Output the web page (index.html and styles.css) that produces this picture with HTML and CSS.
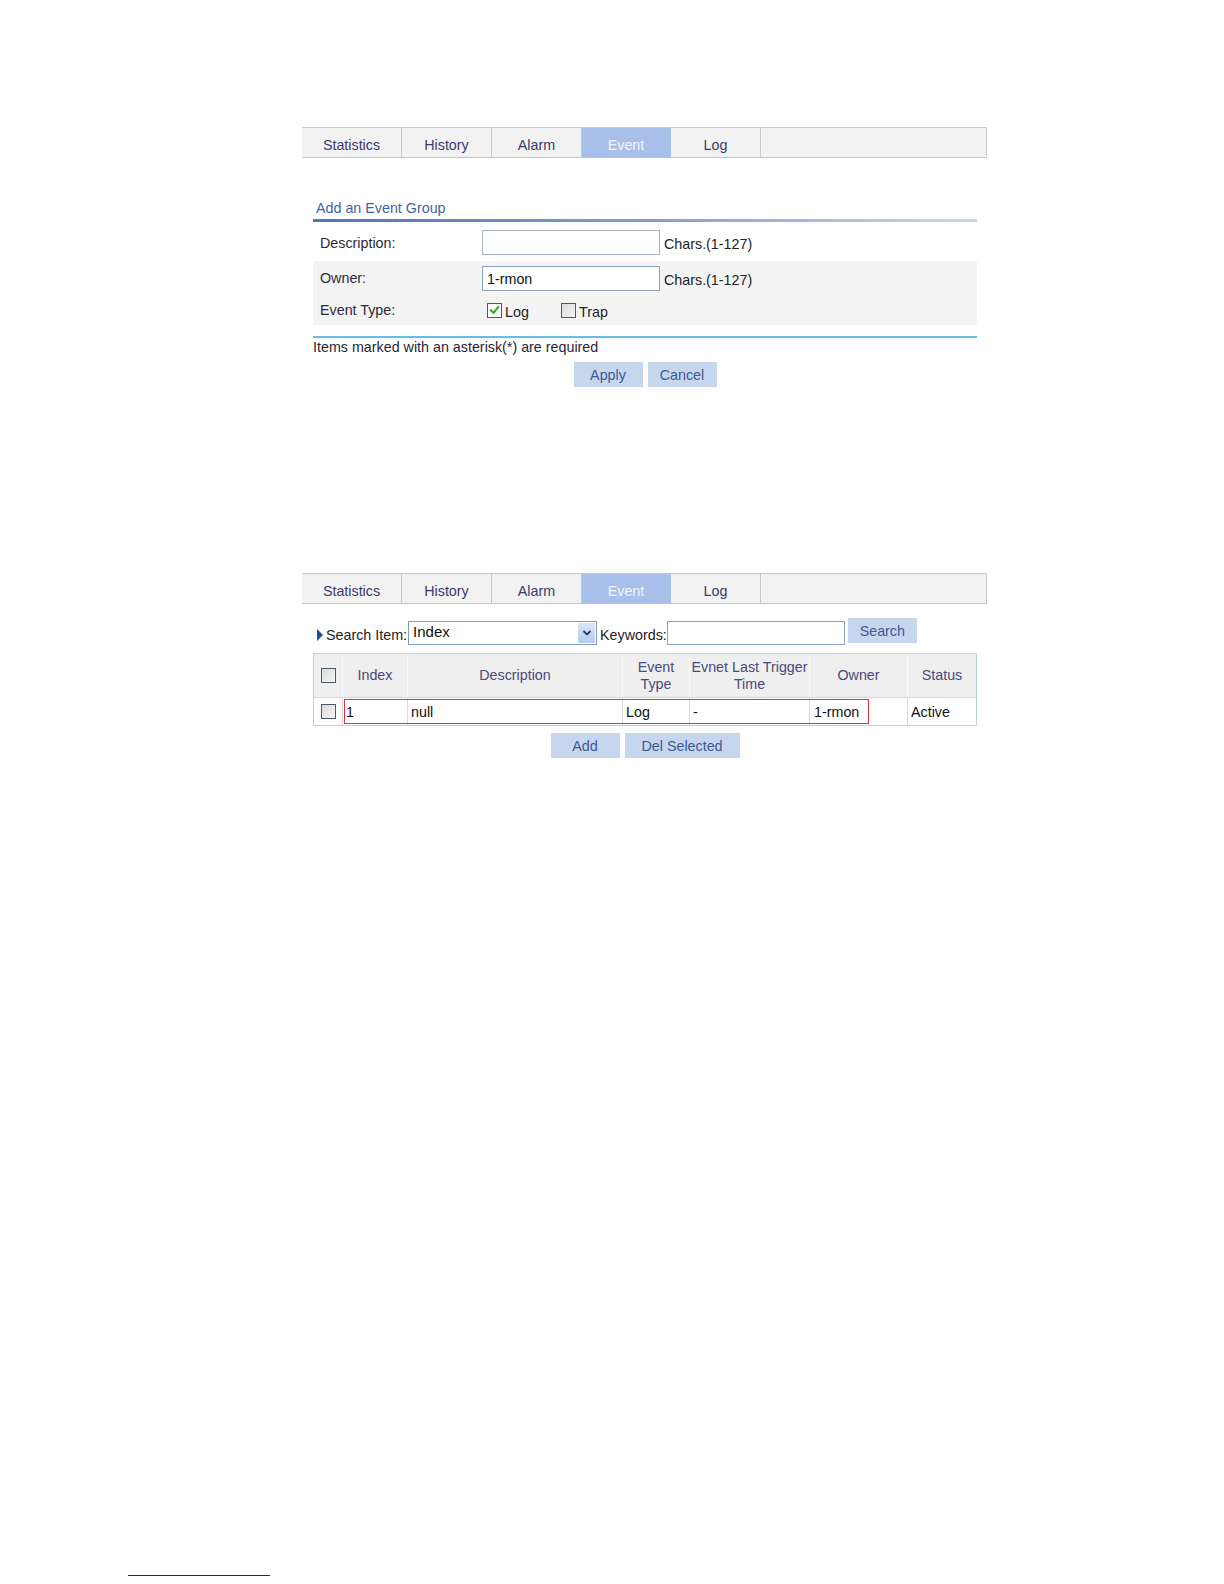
FILE: index.html
```html
<!DOCTYPE html>
<html lang="en">
<head>
<meta charset="utf-8">
<title>RMON Event</title>
<link rel="stylesheet" href="styles.css">
</head>
<body>
<div class="page">
  <section class="screen screen-add">
    <nav class="tabs">
      <div class="tab tab-stats">Statistics</div>
      <div class="tab tab-history">History</div>
      <div class="tab tab-alarm">Alarm</div>
      <div class="tab tab-event active">Event</div>
      <div class="tab tab-log">Log</div>
    </nav>
    <div class="panel">
      <div class="group-title">Add an Event Group</div>
      <div class="group-rule"></div>
      <div class="form">
        <div class="row row-white">
          <div class="label">Description:</div>
          <div class="field"><div class="text-input"></div><span class="hint">Chars.(1-127)</span></div>
        </div>
        <div class="row row-gray row-owner">
          <div class="label">Owner:</div>
          <div class="field"><div class="text-input blue">1-rmon</div><span class="hint">Chars.(1-127)</span></div>
        </div>
        <div class="row row-gray row-type">
          <div class="label">Event Type:</div>
          <div class="field">
            <span class="option option-log"><span class="check checked"><svg viewBox="0 0 14 14" width="14" height="14"><path d="M3 7.2 L6 10.2 L11.2 3.6" fill="none" stroke="#2ea82e" stroke-width="2.2" stroke-linecap="round" stroke-linejoin="round"/></svg></span><span class="check-label">Log</span></span>
            <span class="option"><span class="check"></span><span class="check-label">Trap</span></span>
          </div>
        </div>
      </div>
      <div class="blue-rule"></div>
      <div class="required">Items marked with an asterisk(*) are required</div>
      <div class="actions">
        <div class="btn btn-apply">Apply</div>
        <div class="btn btn-cancel">Cancel</div>
      </div>
    </div>
  </section>

  <section class="screen screen-list">
    <nav class="tabs">
      <div class="tab tab-stats">Statistics</div>
      <div class="tab tab-history">History</div>
      <div class="tab tab-alarm">Alarm</div>
      <div class="tab tab-event active">Event</div>
      <div class="tab tab-log">Log</div>
    </nav>
    <div class="panel">
      <div class="search-row">
        <span class="marker"></span>
        <span class="search-label">Search Item:</span>
        <div class="select"><span class="select-value">Index</span><span class="select-arrow"><svg viewBox="0 0 10 8" width="10" height="8"><path d="M1.5 2 L5 5.5 L8.5 2" fill="none" stroke="#2c3e6a" stroke-width="1.8"/></svg></span></div>
        <span class="kw-label">Keywords:</span>
        <div class="text-input kw-input"></div>
        <div class="btn btn-search">Search</div>
      </div>
      <div class="grid">
        <div class="grid-head">
          <div class="cell c-cb"><span class="check"></span></div>
          <div class="cell c-index">Index</div>
          <div class="cell c-desc">Description</div>
          <div class="cell c-type">Event<br>Type</div>
          <div class="cell c-time">Evnet Last Trigger<br>Time</div>
          <div class="cell c-owner">Owner</div>
          <div class="cell c-status">Status</div>
        </div>
        <div class="grid-row">
          <div class="cell c-cb"><span class="check"></span></div>
          <div class="cell c-index">1</div>
          <div class="cell c-desc">null</div>
          <div class="cell c-type">Log</div>
          <div class="cell c-time">-</div>
          <div class="cell c-owner">1-rmon</div>
          <div class="cell c-status">Active</div>
          <div class="highlight"></div>
        </div>
      </div>
      <div class="actions actions-list">
        <div class="btn btn-add">Add</div>
        <div class="btn btn-del">Del Selected</div>
      </div>
    </div>
  </section>

  <div class="footnote-rule"></div>
</div>
</body>
</html>
```

FILE: styles.css
```css
html, body {
  margin: 0;
  padding: 0;
  background: #ffffff;
}

body {
  font-family: "Liberation Sans", Arial, sans-serif;
  font-size: 14.3px;
  color: #222222;
  width: 1224px;
  height: 1584px;
  overflow: hidden;
}

.page {
  padding-top: 127px;
  padding-left: 302px;
  width: 686px;
}

.screen-list {
  margin-top: 186px;
}

/* Tabs */
.tabs {
  display: flex;
  height: 29px;
  background: #f2f2f2;
  border-top: 1px solid #c9c9c9;
  border-bottom: 1px solid #c4c4c4;
  border-right: 1px solid #c9c9c9;
  width: 684px;
}

.tab {
  display: flex;
  align-items: center;
  justify-content: center;
  color: #3a3a6e;
  border-right: 1px solid #c9c9c9;
  padding-top: 4px;
  box-sizing: border-box;
}

.tab-stats { width: 100px; }
.tab-history { width: 90px; }
.tab-alarm { width: 90px; }
.tab-event { width: 89px; }
.tab-log { width: 90px; }

.tab.active {
  background: #a8c0e9;
  color: #f2f6ff;
  border-right-color: #a8c0e9;
}

/* Panel */
.panel {
  margin-left: 11px;
  width: 664px;
}

.group-title {
  margin-top: 41px;
  padding-left: 3px;
  line-height: 18px;
  color: #3d64a4;
}

.group-rule {
  margin-top: 2px;
  height: 3px;
  background: linear-gradient(to right, #4f78b2 0%, #7f9fc8 50%, #c9d9ec 100%);
}

.form {
  display: flex;
  flex-direction: column;
}

.row {
  display: flex;
  align-items: center;
}

.row-white {
  height: 39px;
  background: #ffffff;
  padding-top: 2px;
  box-sizing: border-box;
}

.row-gray {
  background: #f4f4f4;
}

.row-owner {
  height: 34px;
}

.row-type {
  height: 30px;
}

.label {
  width: 162px;
  padding-left: 7px;
  color: #2e2a3c;
}

.field {
  display: flex;
  align-items: center;
}

.text-input {
  width: 178px;
  height: 25px;
  box-sizing: border-box;
  border: 1px solid #a9b2bf;
  background: #ffffff;
  padding: 3px 4px 0;
  line-height: 18px;
  color: #111111;
}

.text-input.blue {
  border-color: #8aa4c4;
}

.hint {
  margin-left: 4px;
  padding-top: 3px;
  color: #222222;
}

.option {
  display: flex;
  align-items: center;
}

.option-log {
  width: 79px;
}

.check {
  display: inline-flex;
  align-items: center;
  justify-content: center;
  width: 15px;
  height: 15px;
  box-sizing: border-box;
  border: 1px solid #4a5a6e;
  background: linear-gradient(135deg, #dcdcdc 0%, #f4f4f4 100%);
}

.check.checked {
  margin-left: 5px;
  background: #ffffff;
}

.check-label {
  margin-left: 3px;
  padding-top: 3px;
  color: #222222;
}

.blue-rule {
  margin-top: 11px;
  height: 2px;
  background: #66bde9;
}

.required {
  margin-top: 1px;
  line-height: 16px;
  color: #2b1f36;
}

.actions {
  display: flex;
  justify-content: center;
  gap: 5px;
  margin-top: 7px;
}

.btn {
  height: 25px;
  box-sizing: border-box;
  background: #c7d6ef;
  color: #3b5a93;
  display: flex;
  align-items: center;
  justify-content: center;
  padding-top: 1px;
}

.btn-apply,
.btn-cancel,
.btn-add,
.btn-search {
  width: 69px;
}

.btn-del {
  width: 115px;
}

/* Search row */
.search-row {
  display: flex;
  align-items: flex-start;
  margin-top: 14px;
  height: 27px;
}

.marker {
  width: 0;
  height: 0;
  margin-top: 11px;
  margin-left: 4px;
  border-top: 6px solid transparent;
  border-bottom: 6px solid transparent;
  border-left: 6px solid #1a4f9a;
}

.search-label {
  margin-left: 3px;
  margin-top: 9px;
  line-height: 16px;
  color: #222222;
}

.select {
  margin-left: 1px;
  margin-top: 3px;
  width: 189px;
  height: 24px;
  box-sizing: border-box;
  border: 1px solid #7f9db9;
  background: #ffffff;
  display: flex;
  justify-content: space-between;
}

.select-value {
  padding-left: 4px;
  line-height: 20px;
  font-size: 15px;
  color: #111111;
}

.select-arrow {
  width: 17px;
  margin: 1px;
  background: linear-gradient(#dbe6f7, #b8cbec);
  display: flex;
  align-items: center;
  justify-content: center;
}

.kw-label {
  margin-left: 3px;
  margin-top: 9px;
  line-height: 16px;
  color: #222222;
}

.kw-input {
  margin-left: 0;
  margin-top: 3px;
  height: 24px;
  border-color: #8aa4c4;
}

.btn-search {
  margin-left: 3px;
}

/* Table */
.grid {
  margin-top: 8px;
  border: 1px solid #bfd0e6;
  width: 664px;
  box-sizing: border-box;
}

.grid-head,
.grid-row {
  display: flex;
  position: relative;
}

.grid-head {
  height: 44px;
  background: #efefef;
  color: #4a4a7c;
  border-bottom: 1px solid #c8d6ea;
  box-sizing: border-box;
}

.grid-row {
  height: 27px;
  background: #ffffff;
  color: #111111;
}

.cell {
  box-sizing: border-box;
  display: flex;
  align-items: center;
}

.grid-head .cell {
  justify-content: center;
  text-align: center;
  line-height: 17px;
  border-right: 1px solid #fafafa;
}

.grid-row .cell {
  padding-left: 3px;
  border-right: 1px solid #d9d9d9;
}

.grid .cell:last-child,
.grid-row .c-status {
  border-right: none;
}

.c-cb { width: 29px; }
.c-index { width: 65px; }
.c-desc { width: 215px; }
.c-type { width: 67px; }
.c-time { width: 120px; }
.c-owner { width: 98px; }
.c-status { width: 68px; }

.grid .c-cb {
  justify-content: center;
  padding-left: 0;
}

.grid-row .c-owner {
  padding-left: 4px;
}

.highlight {
  position: absolute;
  left: 30px;
  top: 1px;
  width: 525px;
  height: 25px;
  box-sizing: border-box;
  border: 1px solid #e0303a;
  pointer-events: none;
}

.actions-list {
  margin-top: 7px;
}

.footnote-rule {
  position: absolute;
  left: 128px;
  top: 1575px;
  width: 142px;
  height: 1px;
  background: #1c1c8a;
}
```
